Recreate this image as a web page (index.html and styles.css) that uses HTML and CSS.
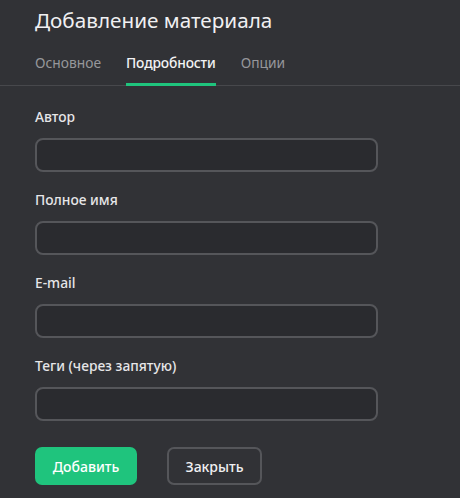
FILE: index.html
```html
<!DOCTYPE html>
<html lang="ru">
<head>
<meta charset="utf-8">
<link rel="stylesheet" href="styles.css">
</head>
<body>
<div class="dialog">
  <header class="head">
    <h1 class="title">Добавление материала</h1>
    <nav class="tabs">
      <span class="tab">Основное</span>
      <span class="tab active">Подробности</span>
      <span class="tab">Опции</span>
    </nav>
  </header>
  <form class="form">
    <div class="field">
      <label class="label">Автор</label>
      <input class="input" type="text">
    </div>
    <div class="field">
      <label class="label">Полное имя</label>
      <input class="input" type="text">
    </div>
    <div class="field">
      <label class="label">E-mail</label>
      <input class="input" type="text">
    </div>
    <div class="field">
      <label class="label">Теги (через запятую)</label>
      <input class="input" type="text">
    </div>
    <div class="actions">
      <button type="button" class="btn primary">Добавить</button>
      <button type="button" class="btn secondary">Закрыть</button>
    </div>
  </form>
</div>
</body>
</html>
```

FILE: styles.css
```css
html, body {
  margin: 0;
  padding: 0;
  background: #313236;
  height: 100%;
}
body {
  font-family: "Noto Sans", "Open Sans", sans-serif;
  color: #e8e8ea;
}
.dialog {
  width: 460px;
}
.head {
  border-bottom: 1px solid #47484c;
}
.title {
  margin: 0;
  padding: 6px 35px 0;
  font-size: 20.7px;
  font-weight: 400;
  line-height: 28px;
  color: #f0f0f2;
}
.tabs {
  display: flex;
  gap: 25px;
  padding: 0 35px;
  margin-top: 19px;
}
.tab {
  font-size: 13.8px;
  line-height: 20px;
  padding-bottom: 10px;
  color: #96979b;
  border-bottom: 3px solid transparent;
  margin-bottom: -1px;
}
.tab.active {
  color: #f2f2f4;
  font-weight: 500;
  letter-spacing: -0.15px;
  border-bottom-color: #1fc47d;
}
.form {
  display: flex;
  flex-direction: column;
  padding: 0 35px;
  margin-top: 21px;
}
.field {
  display: flex;
  flex-direction: column;
  margin-bottom: 18px;
}
.label {
  font-size: 13.8px;
  font-weight: 500;
  line-height: 20px;
  color: #e6e6e8;
  margin-bottom: 11px;
}
.input {
  box-sizing: border-box;
  width: 343px;
  height: 34px;
  margin: 0;
  background: #2a2b2f;
  border: 2px solid #55565a;
  border-radius: 8px;
  outline: none;
  color: #e6e6e8;
  font: inherit;
}
.actions {
  display: flex;
  gap: 30px;
  margin-top: 8px;
}
.btn {
  box-sizing: border-box;
  height: 38px;
  border-radius: 7px;
  font-family: inherit;
  font-size: 14px;
  font-weight: 500;
  cursor: pointer;
}
.primary {
  width: 102px;
  background: #1fc47d;
  border: none;
  color: #ffffff;
}
.secondary {
  width: 95px;
  background: transparent;
  border: 2px solid #55565a;
  color: #f0f0f2;
}
```
